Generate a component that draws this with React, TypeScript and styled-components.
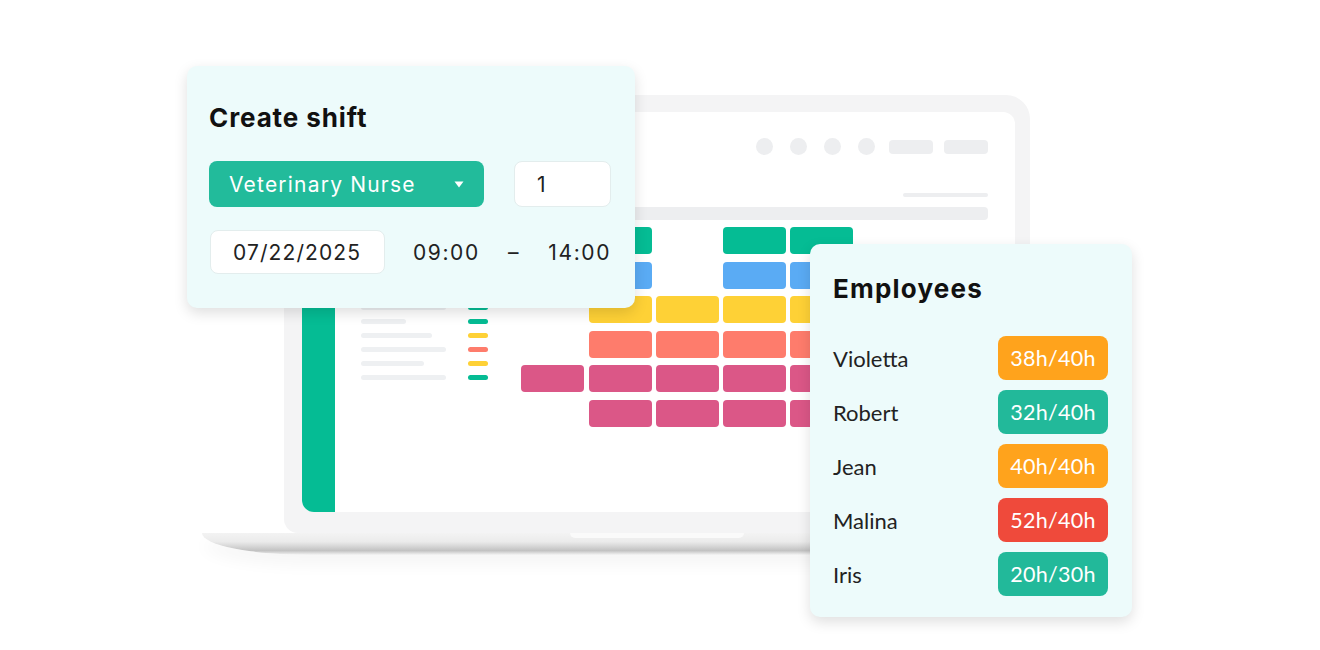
import styled, { createGlobalStyle } from "styled-components";

const GlobalStyle = createGlobalStyle`
  html, body {
    margin: 0;
    padding: 0;
    background: #fff;
  }
  body {
    font-family: "Inter", "Noto Sans", sans-serif;
    color: #1c1c1c;
  }
`;

const GREEN = "#05bc94";
const BLUE = "#5aabf4";
const YELLOW = "#fed136";
const SALMON = "#fe7c6c";
const PINK = "#db5787";

// rows of the little list on the left of the screen (top ones sit under the card)
const listRows = [
  { w: 70, c: GREEN },
  { w: 55, c: BLUE },
  { w: 85, c: YELLOW },
  { w: 60, c: SALMON },
  { w: 75, c: PINK },
  { w: 85, c: GREEN },
  { w: 45, c: GREEN },
  { w: 71, c: YELLOW },
  { w: 85, c: SALMON },
  { w: 63, c: YELLOW },
  { w: 85, c: GREEN },
];

const shiftRows = [
  { color: GREEN, cells: [1, 1, 0, 1, 1, 0, 0] },
  { color: BLUE, cells: [1, 1, 0, 1, 1, 1, 0] },
  { color: YELLOW, cells: [0, 1, 1, 1, 1, 1, 0] },
  { color: SALMON, cells: [0, 1, 1, 1, 1, 1, 0] },
  { color: PINK, cells: [1, 1, 1, 1, 1, 1, 0] },
  { color: PINK, cells: [0, 1, 1, 1, 1, 1, 0] },
];

const employees = [
  { name: "Violetta", hours: "38h/40h", color: "#ffa31c" },
  { name: "Robert", hours: "32h/40h", color: "#22b99a" },
  { name: "Jean", hours: "40h/40h", color: "#ffa31c" },
  { name: "Malina", hours: "52h/40h", color: "#ef4a3b" },
  { name: "Iris", hours: "20h/30h", color: "#22b99a" },
];

function App() {
  return (
    <>
      <GlobalStyle />
      <Stage>
        <Laptop>
          <Lid>
            <Screen>
              <Sidebar />
              <Main>
                <TopBar>
                  <Dots>
                    <Dot />
                    <Dot />
                    <Dot />
                    <Dot />
                  </Dots>
                  <Pills>
                    <Pill />
                    <Pill />
                  </Pills>
                </TopBar>
                <SubLine />
                <WideBar />
                <Body>
                  <List>
                    {listRows.map((row, i) => (
                      <ListRow key={i}>
                        <ListLine style={{ width: row.w }} />
                        <ListTag $color={row.c} />
                      </ListRow>
                    ))}
                  </List>
                  <ShiftGrid>
                    {shiftRows.map((row, r) =>
                      row.cells.map((on, c) =>
                        on ? <Shift key={r + "_" + c} $color={row.color} /> : <span key={r + "_" + c} />
                      )
                    )}
                  </ShiftGrid>
                </Body>
              </Main>
            </Screen>
          </Lid>
          <Base>
            <Notch />
          </Base>
        </Laptop>

        <CreateCard>
          <CardTitle>Create shift</CardTitle>
          <FormRow>
            <Select>
              Veterinary Nurse
              <svg width="10" height="7" viewBox="0 0 10 7">
                <path d="M0.5 0.5 L9.5 0.5 L5 6.5 Z" fill="#fff" />
              </svg>
            </Select>
            <Field $width={97}>1</Field>
          </FormRow>
          <DateRow>
            <Field $width={175} $height={44}>07/22/2025</Field>
            <Times>
              <span>09:00</span>
              <span>–</span>
              <span>14:00</span>
            </Times>
          </DateRow>
        </CreateCard>

        <EmployeesCard>
          <EmployeesTitle>Employees</EmployeesTitle>
          <EmployeeList>
            {employees.map((e) => (
              <EmployeeRow key={e.name}>
                <Name>{e.name}</Name>
                <Badge $color={e.color}>{e.hours}</Badge>
              </EmployeeRow>
            ))}
          </EmployeeList>
        </EmployeesCard>
      </Stage>
    </>
  );
}

export default App;

const Stage = styled.div`
  position: relative;
  width: 1320px;
  height: 650px;
  overflow: hidden;
  background: #fff;
`;

const Laptop = styled.div`
  width: 910px;
  margin-left: 202px;
  padding-top: 95px;
`;

const Lid = styled.div`
  width: 746px;
  height: 438px;
  margin: 0 auto;
  box-sizing: border-box;
  padding: 17px 15px 21px 18px;
  background: #f4f4f5;
  border-radius: 24px 24px 14px 14px;
`;

const Screen = styled.div`
  display: flex;
  height: 100%;
  background: #fff;
  border-radius: 12px;
  overflow: hidden;
`;

const Sidebar = styled.div`
  width: 34px;
  background: ${GREEN};
`;

const Main = styled.div`
  flex: 1;
  display: flex;
  flex-direction: column;
  padding: 26px 27px 0 26px;
`;

const TopBar = styled.div`
  display: flex;
  justify-content: flex-end;
  align-items: center;
  gap: 14px;
  height: 17px;
`;

const Dots = styled.div`
  display: flex;
  gap: 17px;
`;

const Dot = styled.div`
  width: 17px;
  height: 17px;
  border-radius: 50%;
  background: #edeef0;
`;

const Pills = styled.div`
  display: flex;
  gap: 11px;
`;

const Pill = styled.div`
  width: 44px;
  height: 14px;
  border-radius: 4px;
  background: #edeef0;
`;

const SubLine = styled.div`
  align-self: flex-end;
  width: 85px;
  height: 4px;
  margin-top: 38px;
  border-radius: 2px;
  background: #edeef0;
`;

const WideBar = styled.div`
  height: 13px;
  margin-top: 10px;
  border-radius: 4px;
  background: #edeef0;
`;

const Body = styled.div`
  display: flex;
  margin-top: 7px;
`;

const List = styled.div`
  width: 127px;
  margin-top: 8px;
  display: flex;
  flex-direction: column;
  gap: 9px;
`;

const ListRow = styled.div`
  display: flex;
  justify-content: space-between;
  align-items: center;
  height: 5px;
`;

const ListLine = styled.div`
  height: 5px;
  border-radius: 3px;
  background: #eef0f2;
`;

const ListTag = styled.div<{ $color: string }>`
  width: 20px;
  height: 5px;
  border-radius: 3px;
  background: ${(p) => p.$color};
`;

const ShiftGrid = styled.div`
  display: grid;
  grid-template-columns: repeat(7, 63px);
  grid-auto-rows: 27px;
  column-gap: 4.3px;
  row-gap: 7.6px;
  margin-left: 33px;
`;

const Shift = styled.div<{ $color: string }>`
  border-radius: 4px;
  background: ${(p) => p.$color};
`;

const Base = styled.div`
  display: flex;
  justify-content: center;
  height: 22px;
  background: linear-gradient(180deg, #f3f3f3 0%, #ebebeb 40%, #c2c2c2 80%, rgba(215, 215, 215, 0.25) 100%);
  border-bottom-left-radius: 110px 22px;
  border-bottom-right-radius: 110px 22px;
  box-shadow: 0 10px 16px rgba(0, 0, 0, 0.04);
`;

const Notch = styled.div`
  width: 174px;
  height: 5px;
  border-radius: 0 0 6px 6px;
  background: #fafafa;
`;

const Card = styled.div`
  position: absolute;
  box-sizing: border-box;
  background: #edfbfb;
  border-radius: 10px;
  box-shadow: 0 5px 14px rgba(0, 0, 0, 0.13);
`;

const CreateCard = styled(Card)`
  left: 187px;
  top: 66px;
  width: 448px;
  height: 242px;
  padding: 37px 24px 0 22px;
`;

const CardTitle = styled.h2`
  margin: 0;
  font: 700 26px/30px "Inter", "Noto Sans", sans-serif;
  color: #111;
  letter-spacing: 0.9px;
`;

const FormRow = styled.div`
  display: flex;
  align-items: center;
  justify-content: space-between;
  margin-top: 28px;
`;

const Select = styled.div`
  display: flex;
  align-items: center;
  justify-content: space-between;
  box-sizing: border-box;
  width: 275px;
  height: 46px;
  padding: 0 20px 0 20px;
  border-radius: 8px;
  background: #22bb9b;
  color: #fff;
  font: 400 21px "Inter", "Noto Sans", sans-serif;
  letter-spacing: 1.2px;
`;

const Field = styled.div<{ $width: number; $height?: number }>`
  display: flex;
  align-items: center;
  box-sizing: border-box;
  width: ${(p) => p.$width}px;
  height: ${(p) => p.$height || 46}px;
  padding-left: 22px;
  border: 1px solid #e3eded;
  border-radius: 8px;
  background: #fff;
  color: #222;
  font: 400 21px "Inter", "Noto Sans", sans-serif;
  letter-spacing: 1.1px;
`;

const DateRow = styled.div`
  display: flex;
  align-items: center;
  margin-top: 23px;
  margin-left: 1px;
`;

const Times = styled.div`
  flex: 1;
  display: flex;
  justify-content: space-between;
  margin-left: 28px;
  color: #222;
  font: 400 21px "Inter", "Noto Sans", sans-serif;
  letter-spacing: 1.6px;
`;

const EmployeesCard = styled(Card)`
  left: 810px;
  top: 244px;
  width: 322px;
  height: 373px;
  padding: 29px 24px 0 23px;
`;

const EmployeesTitle = styled.h2`
  margin: 0;
  font: 700 26px/32px "Inter", "Noto Sans", sans-serif;
  color: #111;
  letter-spacing: 1.2px;
`;

const EmployeeList = styled.div`
  display: flex;
  flex-direction: column;
  gap: 10px;
  margin-top: 31px;
`;

const EmployeeRow = styled.div`
  display: flex;
  align-items: center;
  justify-content: space-between;
  height: 44px;
`;

const Name = styled.span`
  font: 400 22px "Lato", "Liberation Sans", sans-serif;
  color: #222;
`;

const Badge = styled.div<{ $color: string }>`
  display: flex;
  align-items: center;
  justify-content: center;
  width: 110px;
  height: 44px;
  border-radius: 8px;
  background: ${(p) => p.$color};
  color: #fff;
  font: 400 21.5px "Lato", "Liberation Sans", sans-serif;
  letter-spacing: 0.3px;
`;
